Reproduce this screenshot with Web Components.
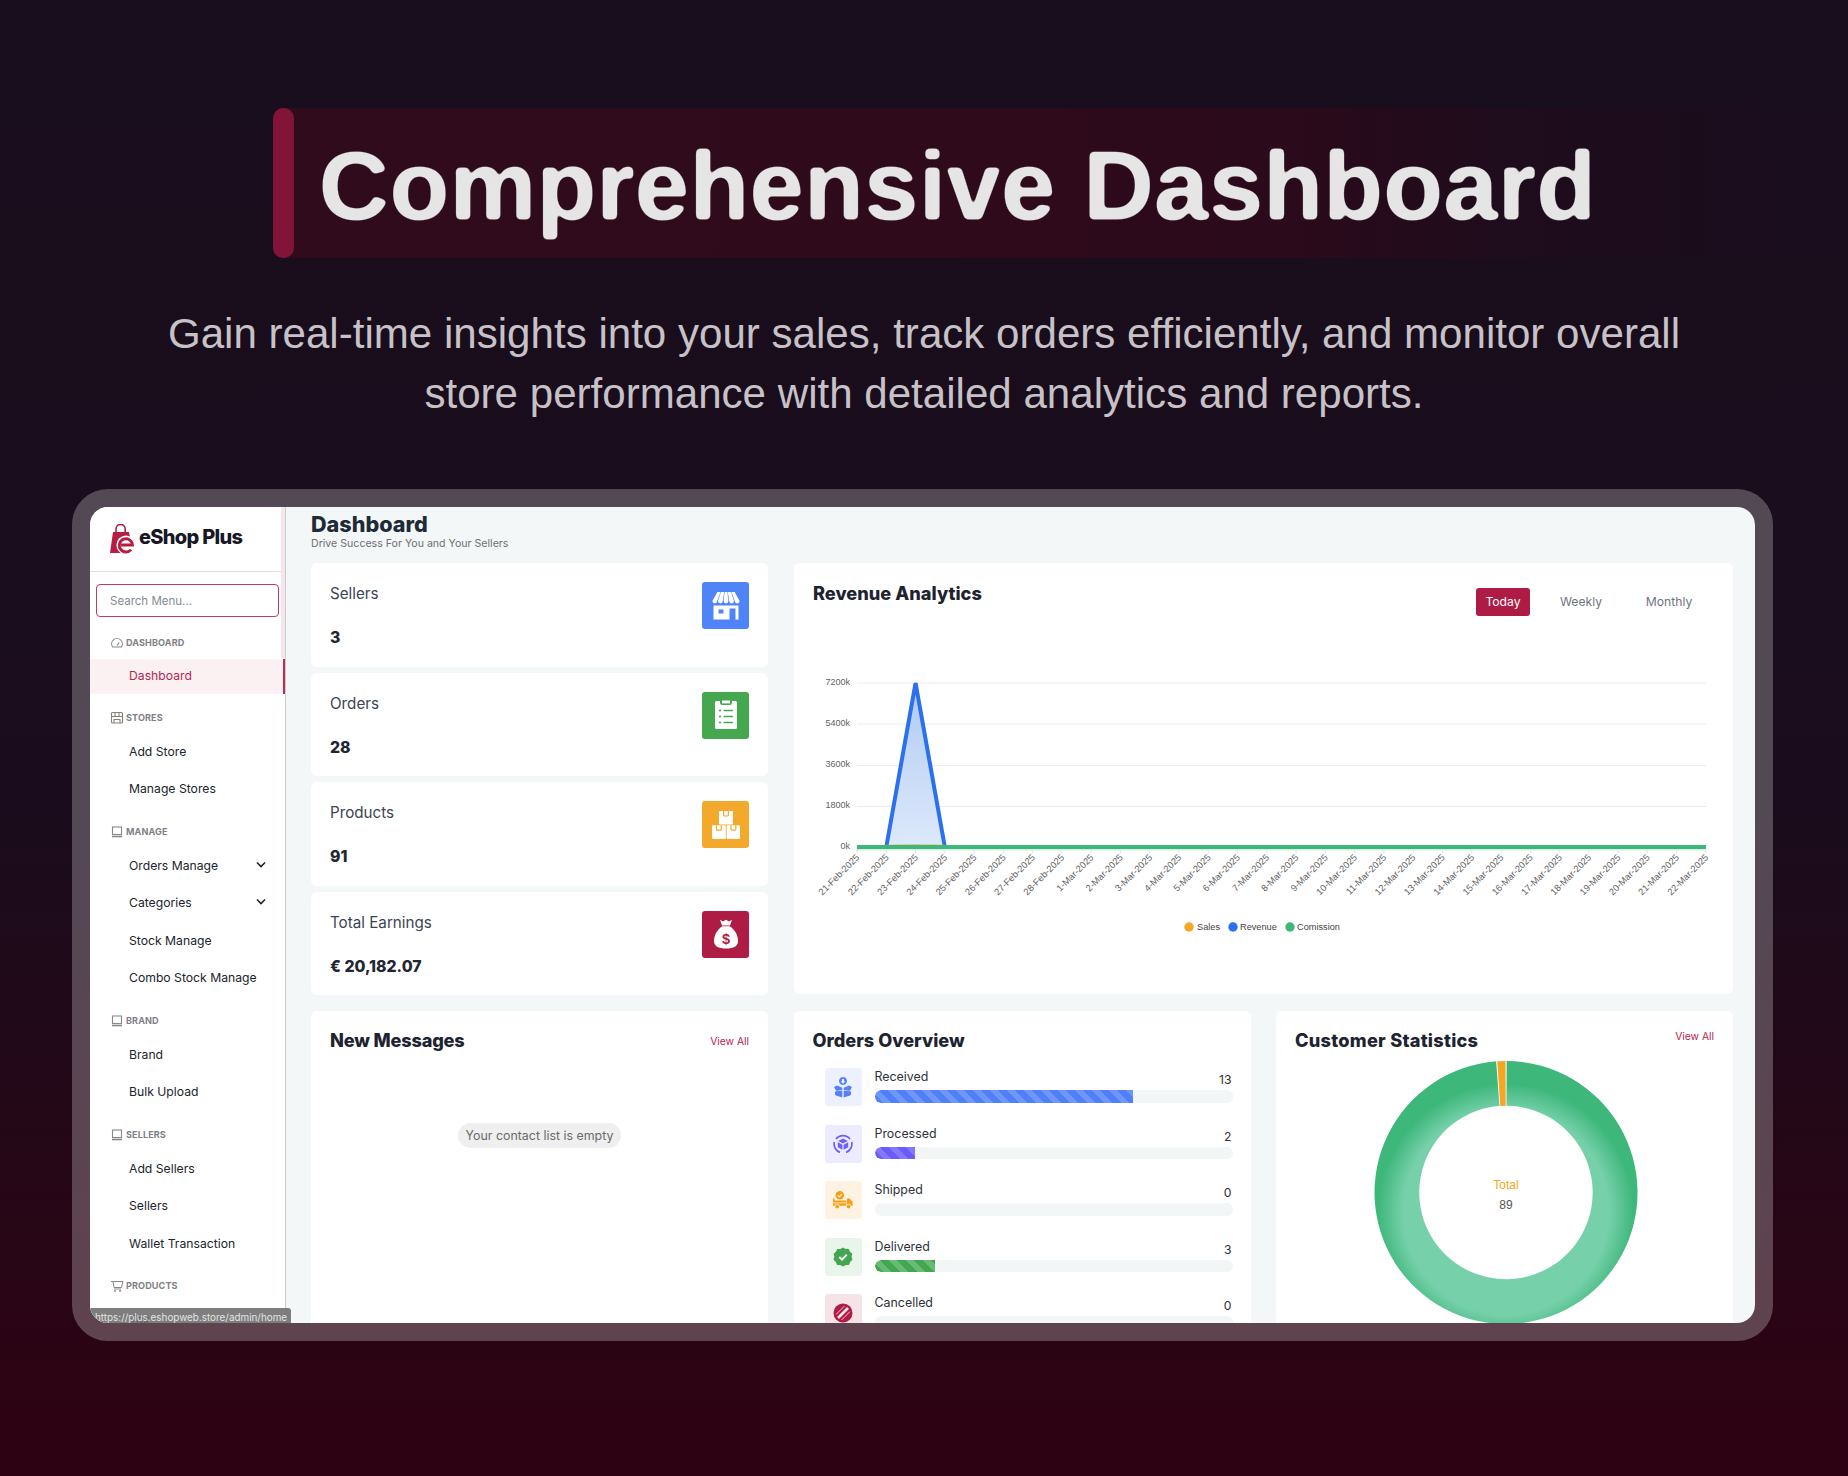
<!DOCTYPE html>
<html lang="en"><head><meta charset="utf-8"><title>Comprehensive Dashboard</title>
<style>
html,body{margin:0;padding:0}
body{width:1848px;height:1476px;overflow:hidden;font-family:"Liberation Sans",sans-serif;background:linear-gradient(180deg,#190e1d 0%,#1a0c1c 55%,#2d0313 96%)}
</style></head><body>
<hero-block></hero-block>
<shot-frame>
  <side-bar slot="side">
    <menu-section label="Dashboard" icon="gauge"><menu-item active>Dashboard</menu-item></menu-section>
    <menu-section label="Stores" icon="store"><menu-item>Add Store</menu-item><menu-item>Manage Stores</menu-item></menu-section>
    <menu-section label="Manage" icon="laptop"><menu-item chevron>Orders Manage</menu-item><menu-item chevron>Categories</menu-item><menu-item>Stock Manage</menu-item><menu-item>Combo Stock Manage</menu-item></menu-section>
    <menu-section label="Brand" icon="laptop"><menu-item>Brand</menu-item><menu-item>Bulk Upload</menu-item></menu-section>
    <menu-section label="Sellers" icon="laptop"><menu-item>Add Sellers</menu-item><menu-item>Sellers</menu-item><menu-item>Wallet Transaction</menu-item></menu-section>
    <menu-section label="Products" icon="cart"><menu-item>Tax</menu-item></menu-section>
  </side-bar>
  <main-area slot="main"></main-area>
  <link-tip slot="tip">https://plus.eshopweb.store/admin/home</link-tip>
</shot-frame>
<script>
const UI='Inter,"Liberation Sans",sans-serif';
function def(name,css,html,init){
  customElements.define(name,class extends HTMLElement{
    constructor(){super();const r=this.attachShadow({mode:'open'});
      r.innerHTML='<style>'+css+'</style>'+(typeof html==='function'?html(this):html);}
    connectedCallback(){
      if(typeof html==='function'){this.shadowRoot.innerHTML='<style>'+css+'</style>'+html(this);}
      if(init)init.call(this);}
  });
}
def('hero-block',`
:host{display:block;padding-top:108px}
.bar{margin-left:273px;width:1575px;height:150px;display:flex;background:linear-gradient(90deg,#2f0b1c 0%,#2e0a1b 50%,#2a0a1b 65%,#1f0c1c 78%,#1b0c1c 90%,rgba(27,12,28,0) 100%);border-radius:10px 0 0 10px}
.acc{width:21px;height:150px;border-radius:10px;background:#82143a;flex:none}
h1{margin:0;font:inherit}
svg{display:block}
p{margin:46px auto 0;width:1600px;text-align:center;font:400 42.1px/60px "Liberation Sans",sans-serif;color:#c6c2c7}
`,`<div class="bar"><div class="acc"></div><h1><svg width="1350" height="150" viewBox="0 0 1350 150">
<defs><filter id="rnd" x="-2%" y="-10%" width="104%" height="120%" color-interpolation-filters="sRGB"><feGaussianBlur stdDeviation="1.9"/><feComponentTransfer><feFuncA type="linear" slope="5" intercept="-1.6"/></feComponentTransfer></filter></defs>
<text x="25" y="111" filter="url(#rnd)" font-family="Liberation Sans" font-weight="700" font-size="97" letter-spacing=".7" fill="#e5e5e6">Comprehensive Dashboard</text></svg></h1></div>
<p>Gain real-time insights into your sales, track orders efficiently, and monitor overall<br>store performance with detailed analytics and reports.</p>`);

def('shot-frame',`
:host{display:block;box-sizing:border-box;width:1701px;height:852px;margin:65px 0 0 72px;border:18px solid rgba(255,255,255,.25);border-radius:36px}
.screen{position:relative;display:flex;width:1665px;height:816px;overflow:hidden;background:#f4f7f8;border-radius:18px;font-family:${UI}}
`,`<div class="screen"><slot name="side"></slot><slot name="main"></slot><slot name="tip"></slot></div>`);

def('link-tip',`
:host{position:absolute;left:0;bottom:0;width:201px;height:15px;box-sizing:border-box;padding-left:5px;background:rgba(105,105,105,.86);border-radius:0 3px 0 0;color:#e4e4e4;font:400 9.9px/18px ${UI};white-space:nowrap;overflow:hidden}
`,`<slot></slot>`);

def('side-bar',`
:host{display:block;position:relative;flex:none;width:196px;height:816px;box-sizing:border-box;background:#fff;border-right:1px solid #c9ccd0;overflow:hidden;font-family:${UI}}
.brand{height:64.5px;box-sizing:border-box;border-bottom:1px solid #dcdcdc;display:flex;align-items:center;padding-left:20px;gap:3px}
.brand b{font:800 20px/24px ${UI};color:#171725;letter-spacing:-.7px;margin-top:-4px}
.search{box-sizing:border-box;margin:12.5px 0 10.5px 6px;width:183px;height:33px;border:1px solid #c43a62;border-radius:4px;padding-left:13px;font:400 11.5px/33px ${UI};color:#858b95}
.thumb{position:absolute;right:0;top:0;width:4px;height:151px;background:#f7e6e9}
`,`<div class="brand">
<svg width="26" height="30" viewBox="0 0 26 30"><path d="M3 8 H19 L21 19 L17 29 H0 Z" fill="#b71c44"/><path d="M6 9 V5 a4.6 4.6 0 0 1 9.2 0 V9" fill="none" stroke="#b71c44" stroke-width="1.6"/><circle cx="16" cy="21" r="9.6" fill="#fff"/><path d="M11 21 H22.5 A6.6 6.6 0 1 0 21 25.6" fill="none" stroke="#b71c44" stroke-width="2.8"/></svg>
<b>eShop Plus</b></div>
<div class="search">Search Menu...</div>
<slot></slot><div class="thumb"></div>`);

const secIcons={
gauge:`<path d="M2.6 11 A5.4 5.4 0 1 1 11.4 11 Z" fill="none" stroke="#888" stroke-width="1.1"/><path d="M7 9.5 L9.2 6.5" stroke="#888" stroke-width="1.2"/>`,
store:`<rect x="1.5" y="1.5" width="11" height="10.5" rx="1" fill="none" stroke="#8a7f78" stroke-width="1.1"/><path d="M1.5 5.5 H12.5 M5 1.5 V5.5 M9 1.5 V5.5 M4 12 V8.5 H10 V12" fill="none" stroke="#8a7f78" stroke-width="1.1"/>`,
laptop:`<rect x="2.5" y="2" width="9" height="7.5" fill="none" stroke="#888" stroke-width="1.1"/><path d="M2 11.5 H12" stroke="#888" stroke-width="1.6"/>`,
cart:`<path d="M1 2.5 H13 L11.4 8.5 H4 L3 2.5 M4 10 H11" fill="none" stroke="#888" stroke-width="1"/><circle cx="5" cy="12" r=".9" fill="#888"/><circle cx="10" cy="12" r=".9" fill="#888"/>`};
def('menu-section',`
:host{display:block;margin-bottom:9px}
.h{height:30px;display:flex;align-items:center;padding-left:20px;gap:2px;font:700 9.1px/30px ${UI};color:#7f7f86;letter-spacing:.1px;text-transform:uppercase}
svg{flex:none}
`,h=>`<div class="h"><svg width="14" height="14" viewBox="0 0 14 14">${secIcons[h.getAttribute('icon')]||''}</svg><span>${h.getAttribute('label')||''}</span></div><slot></slot>`);

def('menu-item',`
:host{display:flex;align-items:center;box-sizing:border-box;height:37.5px;padding-left:39px;font:400 12.2px/16px ${UI};color:#20242c;position:relative}
:host([active]){height:35px;margin:1.25px 0;background:#fbf1f3;color:#b8244f;border-right:2px solid #c22a55}
svg{position:absolute;left:166px;top:14px}
`,h=>`<slot></slot>${h.hasAttribute('chevron')?'<svg width="10" height="8" viewBox="0 0 10 8"><path d="M1 1.5 L5 5.5 L9 1.5" fill="none" stroke="#222" stroke-width="1.6"/></svg>':''}`);

def('stat-card',`
:host{display:flex;justify-content:space-between;box-sizing:border-box;height:103.5px;padding:19px;background:#fff;border-radius:6px;font-family:${UI}}
.l{margin-top:1px;font:400 15.2px/22px ${UI};color:#3b4454}
.v{margin-top:22px;font:800 15.8px/22px ${UI};color:#1f2733}
.i{width:47px;height:47px;border-radius:3px;display:flex;align-items:center;justify-content:center;background:var(--c)}
`,h=>`<div><div class="l">${h.getAttribute('label')}</div><div class="v">${h.getAttribute('value')}</div></div><div class="i" style="--c:${h.getAttribute('color')}"><slot></slot></div>`);

def('panel-card',`
:host{display:block;box-sizing:border-box;background:#fff;border-radius:6px;padding:18px;overflow:hidden;font-family:${UI}}
.t{display:flex;justify-content:space-between;align-items:flex-start;height:22px}
h3{margin:0 0 0 1px;font:800 18.2px/22px ${UI};color:#1d2330;letter-spacing:var(--ls,0)}
a{font:400 10.3px/14px ${UI};color:#b8244f;margin-right:1px;margin-top:var(--vt,5px)}
`,h=>`<div class="t"><h3>${h.getAttribute('heading')}</h3>${h.hasAttribute('viewall')?'<a>View All</a>':''}</div><slot></slot>`);

def('order-row',`
:host{display:flex;gap:13px;height:38px;margin-bottom:18.5px;padding-left:13px}
.ic{flex:none;width:37px;height:38px;border-radius:3px;background:var(--bg);display:flex;align-items:center;justify-content:center}
.r{flex:1;min-width:0}
.top{display:flex;justify-content:space-between;height:22px}
.n{font:400 12.4px/16px ${UI};color:#2c3038;margin-top:1px}
.c{font:400 12.2px/16px ${UI};color:#2c3038;margin-top:4px;margin-right:1px}
.b{height:12.5px;border-radius:6px;background:#f3f6f6;overflow:hidden}
.f{height:100%;border-radius:6px 0 0 6px;background:repeating-linear-gradient(45deg,var(--a) 0 6px,var(--d) 6px 12px)}
`,h=>`<div class="ic" style="--bg:${h.getAttribute('bg')}"><slot></slot></div><div class="r"><div class="top"><span class="n">${h.getAttribute('label')}</span><span class="c">${h.getAttribute('count')}</span></div><div class="b"><div class="f" style="width:${h.getAttribute('pct')}px;--a:${h.getAttribute('a')};--d:${h.getAttribute('d')}"></div></div></div>`);

function chartSvg(){
  const X=x=>x-794,Y=y=>y-631;
  const x0=857,x1=1706,step=(x1-x0)/29;
  const days=[];for(let d=21;d<=28;d++)days.push(d+'-Feb-2025');for(let d=1;d<=22;d++)days.push(d+'-Mar-2025');
  let s='<svg width="939" height="363" viewBox="0 0 939 363" style="display:block">';
  s+='<defs><linearGradient id="rv" x1="0" y1="0" x2="0" y2="1"><stop offset="0" stop-color="#b0caf3"/><stop offset="1" stop-color="#dde9fb"/></linearGradient></defs>';
  [683,724,765.5,806.5].forEach(y=>s+=`<line x1="${X(x0)}" x2="${X(x1)}" y1="${Y(y)}" y2="${Y(y)}" stroke="#ececee" stroke-width="1"/>`);
  ['7200k','5400k','3600k','1800k','0k'].forEach((t,i)=>{const y=[682,723,764,805,846][i];s+=`<text x="${X(850)}" y="${Y(y)+3}" text-anchor="end" font-family="Liberation Sans" font-size="9" fill="#5f5f5f">${t}</text>`;});
  days.forEach((d,i)=>{const x=x0+i*step;
    s+=`<line x1="${X(x)}" x2="${X(x)}" y1="${Y(849)}" y2="${Y(853)}" stroke="#e2e2e2"/>`;
    s+=`<text transform="translate(${(X(x)+3).toFixed(1)} ${Y(858)}) rotate(-45)" text-anchor="end" font-family="Liberation Sans" font-size="9.3" fill="#5f5f5f">${d}</text>`;});
  const a=x0+step,b=x0+2*step,c=x0+3*step;
  s+=`<path d="M${X(a)} ${Y(847)} L${X(b)} ${Y(683)} L${X(c)} ${Y(847)} Z" fill="url(#rv)"/>`;
  s+=`<path d="M${X(a)} ${Y(847)} L${X(b)} ${Y(683)} L${X(c)} ${Y(847)}" fill="none" stroke="#2b70ee" stroke-width="4" stroke-linejoin="miter"/>`;
  s+=`<path d="M${X(a)} ${Y(845)} L${X(b)} ${Y(844.5)} L${X(c)} ${Y(845)}" fill="none" stroke="#f5a623" stroke-width="1" opacity=".6"/>`;
  s+=`<rect x="${X(x0)}" y="${Y(845)}" width="${x1-x0}" height="4" fill="#3eb77b"/><rect x="${X(x0)}" y="${Y(849)}" width="${x1-x0}" height="1.5" fill="#d4f0e2"/>`;
  [[1189,'#f5a623','Sales',1197],[1233,'#2b70ee','Revenue',1240],[1290,'#3eb77b','Comission',1297]].forEach(l=>{
    s+=`<circle cx="${X(l[0])}" cy="${Y(927)}" r="4.7" fill="${l[1]}"/><text x="${X(l[3])}" y="${Y(927)+3}" font-family="Liberation Sans" font-size="9.2" fill="#444">${l[2]}</text>`;});
  return s+'</svg>';
}
def('revenue-card',`
:host{display:block;position:relative;box-sizing:border-box;height:431px;background:#fff;border-radius:6px;font-family:${UI}}
.hd{display:flex;justify-content:space-between;height:68px;box-sizing:border-box;padding:18.5px 27px 0 19px}
h3{margin:0;font:800 18.2px/22px ${UI};color:#1d2330;letter-spacing:0}
.tabs{display:flex;gap:20px;margin-top:6.5px;height:28px}
.tabs span{display:block;text-align:center;font:400 12.2px/27px ${UI};color:#6f7580;border-radius:3px}
.on{width:54px;background:#ae1c46;color:#fff!important}
`,`<div class="hd"><h3>Revenue Analytics</h3><div class="tabs"><span class="on">Today</span><span style="width:62px">Weekly</span><span style="width:74px">Monthly</span></div></div>${chartSvg()}`);

function arc(cx,cy,ro,ri,a0,a1){const p=(r,a)=>[(cx+r*Math.sin(a*Math.PI/180)).toFixed(2),(cy-r*Math.cos(a*Math.PI/180)).toFixed(2)];
  const l=(a1-a0)>180?1:0,A=p(ro,a0),B=p(ro,a1),C=p(ri,a1),D=p(ri,a0);
  return `M${A} A${ro} ${ro} 0 ${l} 1 ${B} L${C} A${ri} ${ri} 0 ${l} 0 ${D} Z`;}
def('donut-chart',`
:host{display:block;margin:0 -18px}
svg{display:block}
`,`<svg width="457" height="300" viewBox="0 0 457 300">
<defs><radialGradient id="dg" gradientUnits="userSpaceOnUse" cx="230" cy="161" r="132"><stop offset="0" stop-color="#76d0aa"/><stop offset=".78" stop-color="#76d0aa"/><stop offset=".97" stop-color="#3eb77b"/><stop offset="1" stop-color="#3eb77b"/></radialGradient></defs>
<path d="${arc(230,141.5,131.5,86.7,0.3,355.7)}" fill="url(#dg)"/>
<path d="${arc(230,141.5,131.5,86.7,356.2,359.8)}" fill="#f5a623"/>
<text x="230" y="138" text-anchor="middle" font-family="Liberation Sans" font-size="12" fill="#f5a623">Total</text>
<text x="230" y="158" text-anchor="middle" font-family="Liberation Sans" font-size="12" fill="#555">89</text>
</svg>`);

def('empty-pill',`
:host{display:block;width:fit-content;margin:72px auto 0;padding:0 8px;height:25px;border-radius:13px;background:#efefef;color:#6a6a6a;font:400 12.4px/25px ${UI}}
`,`<slot></slot>`);

def('main-area',`
:host{display:block;flex:1;min-width:0;box-sizing:border-box;padding:0 22px 0 25px;height:816px;overflow:hidden;font-family:${UI}}
.head{height:56px;box-sizing:border-box;padding-top:5px}
h1{margin:0;font:800 21.6px/24px ${UI};color:#1f2a38;letter-spacing:0}
small{display:block;font:400 10.6px/14px ${UI};color:#6f6f74;margin-top:1px}
.top{display:grid;grid-template-columns:457px 1fr;gap:0 26px;height:433px}
.stack{display:flex;flex-direction:column;gap:6.17px}
.bot{display:grid;grid-template-columns:457px 457px 457px;gap:25.5px;margin-top:15px}
panel-card{height:400px}
`,`<div class="head"><h1>Dashboard</h1><small>Drive Success For You and Your Sellers</small></div>
<div class="top"><div class="stack">
<stat-card label="Sellers" value="3" color="#4f84f9"><svg width="30" height="30" viewBox="0 0 30 30"><g fill="#fff"><path d="M6.4 1H9.6L6.2 10A2.4 2.4 0 0 1 1.4 10Z"/><path d="M10 1H13.2L11.8 10A2.4 2.4 0 0 1 7 10Z"/><path d="M13.6 1H16.4L17.4 10A2.4 2.4 0 0 1 12.6 10Z"/><path d="M16.8 1H20L23 10A2.4 2.4 0 0 1 18.2 10Z"/><path d="M20.4 1H23.6L28.6 10A2.4 2.4 0 0 1 23.8 10Z"/><path fill-rule="evenodd" d="M2.5 14.5 H27.5 V28.5 H24.5 V17.5 H18.5 V28.5 H2.5 Z M7.5 18.5 V22.5 H12.5 V18.5 Z"/></g></svg></stat-card>
<stat-card label="Orders" value="28" color="#45a84f"><svg width="24" height="30" viewBox="0 0 24 30"><path fill="#fff" d="M2.5 1 H6 V2.5 A2.5 2.5 0 0 0 8.5 5 H15.5 A2.5 2.5 0 0 0 18 2.5 V1 H21.5 A1.5 1.5 0 0 1 23 2.5 V27.5 A1.5 1.5 0 0 1 21.5 29 H2.5 A1.5 1.5 0 0 1 1 27.5 V2.5 A1.5 1.5 0 0 1 2.5 1 Z"/><path fill="#fff" d="M8 .5 H16 V3.4 H8 Z"/><g fill="#45a84f"><circle cx="6" cy="10.5" r="1.1"/><circle cx="6" cy="16.5" r="1.1"/><circle cx="6" cy="22.5" r="1.1"/><rect x="9.5" y="9.8" width="9.5" height="1.4" rx=".7"/><rect x="9.5" y="15.8" width="9.5" height="1.4" rx=".7"/><rect x="9.5" y="21.8" width="9.5" height="1.4" rx=".7"/></g></svg></stat-card>
<stat-card label="Products" value="91" color="#f2a92c"><svg width="30" height="30" viewBox="0 0 30 30"><g fill="#fff"><rect x="8" y="1" width="14" height="13.6" rx="1"/><rect x="1" y="15.2" width="13.8" height="13.8" rx="1"/><rect x="15.6" y="15.2" width="13.4" height="13.8" rx="1"/></g><path d="M12.6 1 V5 A1 1 0 0 0 13.6 6 H16.4 A1 1 0 0 0 17.4 5 V1 M5.5 15.2 V19.2 A1 1 0 0 0 6.5 20.2 H9.3 A1 1 0 0 0 10.3 19.2 V15.2 M20 15.2 V19.2 A1 1 0 0 0 21 20.2 H23.8 A1 1 0 0 0 24.8 19.2 V15.2" fill="none" stroke="#f2a92c" stroke-width="1.2"/></svg></stat-card>
<stat-card label="Total Earnings" value="€ 20,182.07" color="#ae1c46"><svg width="26" height="30" viewBox="0 0 26 30"><path fill="#fff" d="M7 .8 L10 2.4 L13 .8 L16 2.4 L19 .8 L17 6.6 H9 Z"/><path fill="#fff" d="M9.4 7.3 H16.6 C22 10.6 25 16.5 25 22 C25 27 21 29.5 13 29.5 C5 29.5 1 27 1 22 C1 16.5 4 10.6 9.4 7.3 Z"/><text x="13" y="24.5" text-anchor="middle" font-family="Liberation Sans" font-weight="700" font-size="14.5" fill="#ae1c46">$</text></svg></stat-card>
</div><revenue-card></revenue-card></div>
<div class="bot">
<panel-card heading="New Messages" viewall style="--ls:-.2px"><empty-pill>Your contact list is empty</empty-pill></panel-card>
<panel-card heading="Orders Overview">
<div style="height:17px"></div>
<order-row label="Received" count="13" pct="258" bg="#edf1fe" a="#4f7ff9" d="#6f96fb"><svg width="20" height="22" viewBox="0 0 20 22"><g fill="#5580f8"><path fill-rule="evenodd" d="M10 1 a4 4 0 1 1 -.01 0 Z M9 3 V5.3 H7.6 L10 7.8 L12.4 5.3 H11 V3 Z"/><path d="M1 11 L4 9.5 L9.3 11.8 V13.8 L3.3 15 Z"/><path d="M19 11 L16 9.5 L10.7 11.8 V13.8 L16.7 15 Z"/><path d="M2 15.5 L9.3 14.5 V21.5 L3 19.5 Q2 19.2 2 18 Z"/><path d="M18 15.5 L10.7 14.5 V21.5 L17 19.5 Q18 19.2 18 18 Z"/></g></svg></order-row>
<order-row label="Processed" count="2" pct="40" bg="#ecebff" a="#6a5cfb" d="#8478fc"><svg width="20" height="20" viewBox="0 0 20 20"><path d="M3 5 A9 9 0 0 1 17 5 M18.7 8 A9 9 0 0 1 13 18.4 M7 18.4 A9 9 0 0 1 1.3 8" fill="none" stroke="#6c5ffc" stroke-width="1.7"/><path fill="#6c5ffc" d="M10 4.5 L14.8 7 L10 9.6 L5.2 7 Z M4.8 8.2 L9.4 10.8 V15.8 L4.8 13.2 Z M15.2 8.2 L10.6 10.8 V15.8 L15.2 13.2 Z"/></svg></order-row>
<order-row label="Shipped" count="0" pct="0" bg="#fef3e2" a="#f59e16" d="#f59e16"><svg width="20" height="18" viewBox="0 0 20 18"><g fill="#f59e16"><circle cx="6.8" cy="4.2" r="4.2"/><path d="M0 7.5 H1.5 V9.6 H13 V11.4 H0 Z"/><path d="M0 12.2 H13 V14.8 H0 Z"/><path d="M13.8 7.5 H16.6 L19.6 11 V14.8 H13.8 Z"/><circle cx="4.2" cy="15.5" r="2.3" stroke="#fef3e2" stroke-width=".8"/><circle cx="15.6" cy="15.5" r="2.3" stroke="#fef3e2" stroke-width=".8"/></g><path d="M4.8 4.3 L6.3 5.8 L9 2.9" fill="none" stroke="#fef3e2" stroke-width="1.2"/></svg></order-row>
<order-row label="Delivered" count="3" pct="60" bg="#e9f5ea" a="#43a651" d="#69ba74"><svg width="20" height="20" viewBox="0 0 20 20"><path fill="#43a651" d="M10 .5 L12.7 2 L15.8 1.9 L17 4.7 L19.4 6.7 L18.6 9.8 L19.5 12.8 L17.1 14.9 L16 17.9 L12.9 17.9 L10 19.5 L7.2 17.9 L4 17.9 L2.9 14.9 L.5 12.8 L1.4 9.8 L.6 6.7 L3 4.7 L4.2 1.9 L7.3 2 Z"/><path d="M6.3 10 L9 12.6 L13.8 7.6" fill="none" stroke="#fff" stroke-width="1.9"/></svg></order-row>
<order-row label="Cancelled" count="0" pct="0" bg="#f6e3e8" a="#ae1c46" d="#ae1c46"><svg width="20" height="20" viewBox="0 0 20 20"><circle cx="10" cy="10" r="9.5" fill="#ae1c46"/><path d="M3 11.5 L11.5 3 M8.5 17 L17 8.5" stroke="#f3c6d1" stroke-width="1"/><path d="M5 15 L15 5" stroke="#f9e4e9" stroke-width="2.6"/></svg></order-row>
</panel-card>
<panel-card heading="Customer Statistics" viewall style="--vt:0px;--ls:.25px"><donut-chart></donut-chart></panel-card>
</div>`);
</script>
</body></html>
